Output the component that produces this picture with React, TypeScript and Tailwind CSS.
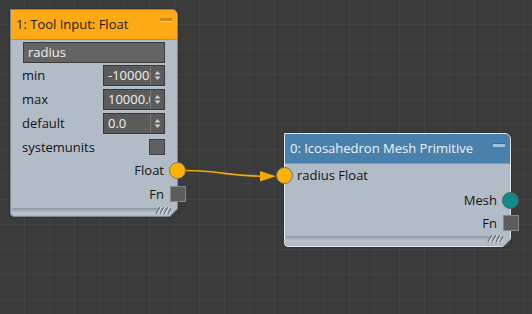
import React from "react";

const font = { fontFamily: '"Open Sans", "DejaVu Sans", sans-serif' };

function Grip() {
  return (
    <svg width="16" height="7" viewBox="0 0 16 7" className="shrink-0">
      {[0, 4, 8, 12].map((x) => (
        <g key={x}>
          <line x1={x + 1} y1={7} x2={x + 5} y2={0} stroke="#5f6a75" strokeWidth="1.2" />
          <line x1={x + 2.3} y1={7} x2={x + 6.3} y2={0} stroke="#e4e9ee" strokeWidth="1" />
        </g>
      ))}
    </svg>
  );
}

function Chamfer({ border }: { border: string }) {
  return (
    <svg width="9" height="9" viewBox="0 0 9 9" className="absolute bottom-[-1px] right-[-1px]">
      <polygon points="9,0 9,9 0,9" fill="#3b3b3b" />
      <line x1="9" y1="0.5" x2="0.5" y2="9" stroke={border} strokeWidth="1" />
    </svg>
  );
}

function Spin({ value }: { value: string }) {
  return (
    <div className="flex h-[21px] w-[62px] border border-[#393939] bg-[#5b5b5b]">
      <div className="flex flex-1 items-center overflow-hidden whitespace-nowrap pl-[4px] text-[13px] leading-none text-[#f2f2f2]">
        {value}
      </div>
      <div className="flex w-[14px] items-center justify-center border-l border-[#7b7b7b]">
        <svg width="7" height="11" viewBox="0 0 7 11">
          <polygon points="3.5,1 6.5,4.5 0.5,4.5" fill="#cfcfcf" />
          <polygon points="0.5,6.5 6.5,6.5 3.5,10" fill="#cfcfcf" />
        </svg>
      </div>
    </div>
  );
}

export default function App() {
  return (
    <div
      className="relative h-[314px] w-[532px] overflow-hidden bg-[#3b3b3b] bg-[linear-gradient(to_right,#434343_1px,transparent_1px),linear-gradient(to_bottom,#434343_1px,transparent_1px)] bg-[size:25px_25px] bg-[position:-1px_-1px]"
      style={font}
    >
      {/* connection */}
      <svg className="pointer-events-none absolute left-0 top-0" width="532" height="314">
        <path d="M185 170.5 C 222 170.5, 226 176.2, 262 176.2" fill="none" stroke="#f2a900" strokeWidth="1.6" />
        <polygon points="260,171 276,176.3 260,181.5" fill="#f2a900" />
      </svg>

      {/* Node 1 */}
      <div className="absolute left-[10px] top-[9px] flex h-[208px] w-[168px] flex-col rounded-tr-[6px] rounded-bl-[4px] border border-[#7c8894] bg-[#b2bcc6] shadow-[0_0_2px_rgba(0,0,0,0.45)]">
        <div className="flex h-[30px] shrink-0 justify-between rounded-tr-[5px] border-b border-[#8e98a2] bg-[#ffaa14] px-[5px]">
          <span className="self-center text-[13px] leading-none text-[#1a1a1a]">1: Tool Input: Float</span>
          <div className="mt-[8px] flex flex-col">
            <div className="h-[3px] w-[12px] bg-[#c98b1c]" />
            <div className="h-[1px] w-[12px] bg-[#fbd88c]" />
          </div>
        </div>

        <div className="ml-[12px] mt-[2px] flex h-[21px] w-[142px] items-center border border-[#3c3c3c] bg-[#646464] pl-[4px] text-[13px] leading-none text-[#f2f2f2]">
          radius
        </div>

        {[
          ["min", "-10000.0", "mt-[2px]"],
          ["max", "10000.0", "mt-[3px]"],
          ["default", "0.0", "mt-[3px]"],
        ].map(([label, value, mt]) => (
          <div key={label} className={`flex h-[21px] items-center justify-between pl-[11px] pr-[12px] ${mt}`}>
            <span className="text-[13px] leading-none text-[#141414]">{label}</span>
            <Spin value={value} />
          </div>
        ))}

        <div className="mt-[5px] flex h-[16px] items-center justify-between pl-[11px] pr-[12px]">
          <span className="text-[13px] leading-none text-[#141414]">systemunits</span>
          <div className="h-[16px] w-[16px] border border-[#3e3e3e] bg-[#606060]" />
        </div>

        <div className="relative mt-[7px] flex h-[17px] items-center justify-end pr-[13px]">
          <span className="text-[13px] leading-none text-[#141414]">Float</span>
          <div className="absolute right-[-9px] top-0 h-[17px] w-[17px] rounded-full border border-[#707070] bg-[#ffb300]" />
        </div>

        <div className="relative mt-[7px] flex h-[16px] items-center justify-end pr-[13px]">
          <span className="text-[13px] leading-none text-[#141414]">Fn</span>
          <div className="absolute right-[-9px] top-0 h-[16px] w-[16px] border border-[#7d8894] bg-[#5d5d5d]" />
        </div>

        <div className="mb-[2px] ml-[1px] mr-[6px] mt-auto flex h-[6px] items-end justify-end rounded-bl-[3px] bg-[linear-gradient(to_bottom,#8c97a2,#a4aeb8_40%,#c2cad1)]">
          <Grip />
        </div>
        <Chamfer border="#7c8894" />
      </div>

      {/* Node 2 */}
      <div className="absolute left-[284px] top-[133px] flex h-[114px] w-[227px] flex-col rounded-tr-[6px] rounded-bl-[4px] border border-[#dfe6ec] bg-[#b2bcc6] shadow-[0_0_2px_rgba(0,0,0,0.45)]">
        <div className="flex h-[30px] shrink-0 justify-between rounded-tr-[5px] border-b border-[#8e98a2] bg-[#4a80ac] px-[5px]">
          <span className="self-center text-[13px] leading-none text-[#eef3f7]">0: Icosahedron Mesh Primitive</span>
          <div className="mt-[9px] flex flex-col">
            <div className="h-[1px] w-[12px] bg-[#3d6a90]" />
            <div className="h-[3px] w-[12px] bg-[#9cc0de]" />
          </div>
        </div>

        <div className="relative mt-[3px] flex h-[17px] items-center pl-[12px]">
          <div className="absolute left-[-9.5px] top-0 h-[17px] w-[17px] rounded-full border border-[#707070] bg-[#ffb300]" />
          <span className="text-[13px] leading-none text-[#141414]">radius Float</span>
        </div>

        <div className="relative mt-[8px] flex h-[17px] items-center justify-end pr-[13px]">
          <span className="text-[13px] leading-none text-[#141414]">Mesh</span>
          <div className="absolute right-[-9px] top-0 h-[17px] w-[17px] rounded-full border border-[#5a5a5a] bg-[#0f8b8b]" />
        </div>

        <div className="relative mt-[6px] flex h-[16px] items-center justify-end pr-[13px]">
          <span className="text-[13px] leading-none text-[#141414]">Fn</span>
          <div className="absolute right-[-9px] top-0 h-[16px] w-[16px] border border-[#7d8894] bg-[#5d5d5d]" />
        </div>

        <div className="mb-[4px] ml-[1px] mr-[7px] mt-auto flex h-[6px] items-end justify-end rounded-bl-[3px] bg-[linear-gradient(to_bottom,#8c97a2,#a4aeb8_40%,#c2cad1)]">
          <Grip />
        </div>
        <Chamfer border="#dfe6ec" />
      </div>
    </div>
  );
}
